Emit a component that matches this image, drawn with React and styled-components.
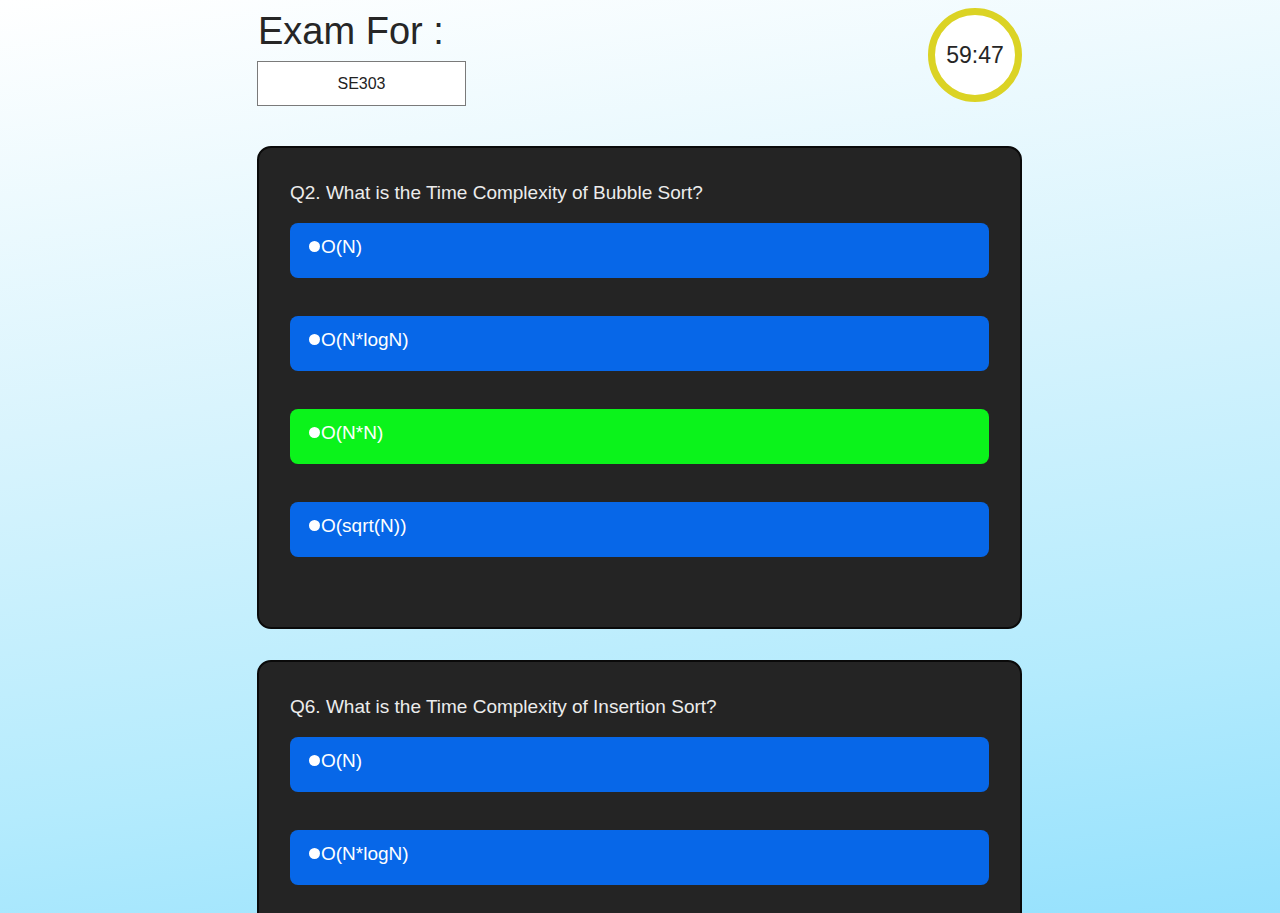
import React from 'react';
import styled, { createGlobalStyle } from 'styled-components';

const GlobalStyle = createGlobalStyle`
  html, body {
    margin: 0;
    padding: 0;
  }
  body {
    font-family: "Liberation Sans", Arial, sans-serif;
    min-height: 100vh;
    background: linear-gradient(172deg, #ffffff 0%, #d9f4fd 40%, #b4ebfd 75%, #95e1fd 100%) fixed;
  }
`;

const Page = styled.div`
  width: 765px;
  margin: 0 auto;
  padding: 6px 1px 0 0;
`;

const Header = styled.header`
  display: flex;
  justify-content: space-between;
  align-items: flex-start;
  margin-bottom: 40px;
`;

const TitleBlock = styled.div`
  display: flex;
  flex-direction: column;
  h1 {
    font-size: 38px;
    font-weight: 400;
    color: #262626;
    margin: 4px 0 8px 1px;
  }
`;

const CodeBox = styled.div`
  width: 209px;
  height: 45px;
  box-sizing: border-box;
  border: 1px solid #7a7a7a;
  background: #fff;
  display: flex;
  align-items: center;
  justify-content: center;
  font-size: 16px;
  color: #222;
`;

const Timer = styled.div`
  width: 94px;
  height: 94px;
  box-sizing: border-box;
  border: 7px solid #dbd324;
  border-radius: 50%;
  background: #fff;
  display: flex;
  align-items: center;
  justify-content: center;
  font-size: 23px;
  color: #262626;
  margin-top: 2px;
`;

const Card = styled.section`
  background: #242424;
  border: 2px solid #0a0a0a;
  border-radius: 14px;
  padding: 34px 31px 32px 31px;
  margin-bottom: 31px;
`;

const Question = styled.p`
  margin: 0 0 19px;
  font-size: 19px;
  color: #ececec;
`;

const Option = styled.div`
  height: 55px;
  box-sizing: border-box;
  padding: 13px 19px;
  margin-bottom: 38px;
  border-radius: 8px;
  background: ${p => (p.$correct ? '#0bf31b' : '#0767e8')};
  color: #fff;
  font-size: 19px;
  display: flex;
  align-items: flex-start;
`;

const Dot = styled.span`
  width: 11px;
  height: 11px;
  border-radius: 50%;
  background: #fff;
  margin-top: 5px;
  margin-right: 1px;
  flex-shrink: 0;
`;

const questions = [
  {
    id: 2,
    text: 'What is the Time Complexity of Bubble Sort?',
    options: ['O(N)', 'O(N*logN)', 'O(N*N)', 'O(sqrt(N))'],
    correct: 2,
  },
  {
    id: 6,
    text: 'What is the Time Complexity of Insertion Sort?',
    options: ['O(N)', 'O(N*logN)', 'O(N*N)', 'O(sqrt(N))'],
    correct: -1,
  },
];

export default function App() {
  return (
    <>
      <GlobalStyle />
      <Page>
        <Header>
          <TitleBlock>
            <h1>Exam For :</h1>
            <CodeBox>SE303</CodeBox>
          </TitleBlock>
          <Timer>59:47</Timer>
        </Header>

        {questions.map(q => (
          <Card key={q.id}>
            <Question>Q{q.id}. {q.text}</Question>
            {q.options.map((o, i) => (
              <Option key={o} $correct={i === q.correct}>
                <Dot />
                {o}
              </Option>
            ))}
          </Card>
        ))}
      </Page>
    </>
  );
}
